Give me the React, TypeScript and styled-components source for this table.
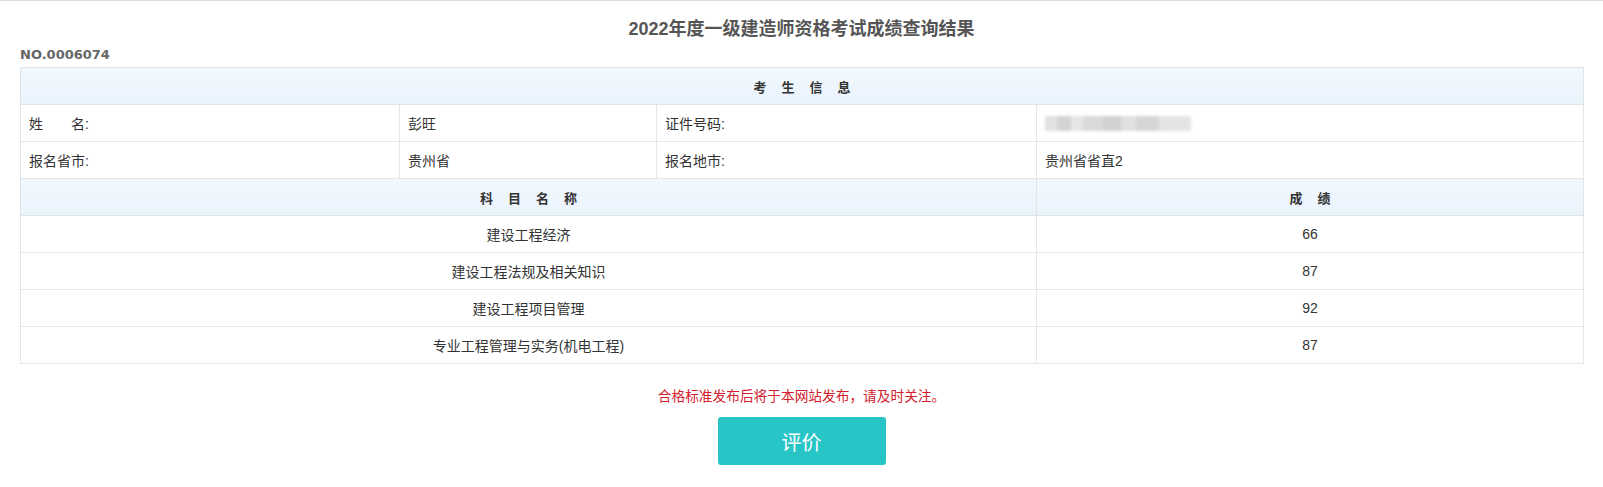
import React from "react";
import styled, { createGlobalStyle } from "styled-components";

const subjects = [
  { name: "建设工程经济", score: 66 },
  { name: "建设工程法规及相关知识", score: 87 },
  { name: "建设工程项目管理", score: 92 },
  { name: "专业工程管理与实务(机电工程)", score: 87 },
];

const GlobalStyle = createGlobalStyle`
  html, body { margin: 0; padding: 0; background: #fff; }
  body {
    font-family: "Liberation Sans", "Noto Sans CJK SC", sans-serif;
    color: #333;
  }
`;

export default function App() {
  return (
    <>
      <GlobalStyle />
      <Page>
        <Title>2022年度一级建造师资格考试成绩查询结果</Title>
        <SerialNo>NO.0006074</SerialNo>
        <ScoreTable>
          <colgroup>
            <col style={{ width: 379 }} />
            <col style={{ width: 257 }} />
            <col style={{ width: 380 }} />
            <col style={{ width: 547 }} />
          </colgroup>
          <tbody>
            <tr>
              <HeadCell colSpan={4}>考生信息</HeadCell>
            </tr>
            <tr>
              <Cell>姓　　名:</Cell>
              <Cell>彭旺</Cell>
              <Cell>证件号码:</Cell>
              <Cell>
                <Blurred />
              </Cell>
            </tr>
            <tr>
              <Cell>报名省市:</Cell>
              <Cell>贵州省</Cell>
              <Cell>报名地市:</Cell>
              <Cell>贵州省省直2</Cell>
            </tr>
            <tr>
              <HeadCell colSpan={3}>科目名称</HeadCell>
              <HeadCell>成绩</HeadCell>
            </tr>
            {subjects.map((s) => (
              <tr key={s.name}>
                <Cell colSpan={3} $center>
                  {s.name}
                </Cell>
                <Cell $center>{s.score}</Cell>
              </tr>
            ))}
          </tbody>
        </ScoreTable>
        <Notice>合格标准发布后将于本网站发布，请及时关注。</Notice>
        <ButtonRow>
          <RateButton>评价</RateButton>
        </ButtonRow>
      </Page>
    </>
  );
}

const Page = styled.div`
  border-top: 1px solid #dcdcdc;
  padding: 0 20px;
`;
const Title = styled.h1`
  margin: 0;
  padding-top: 16px;
  font-size: 18px;
  line-height: 24px;
  font-weight: 700;
  color: #555;
  text-align: center;
`;
const SerialNo = styled.div`
  margin-top: 6px;
  font-family: "DejaVu Sans", sans-serif;
  font-size: 13px;
  line-height: 16px;
  font-weight: 700;
  color: #666;
`;
const ScoreTable = styled.table`
  margin-top: 4px;
  width: 100%;
  table-layout: fixed;
  border-collapse: collapse;
  border: 1px solid #dfe4e8;
  font-size: 14px;
`;
const HeadCell = styled.td`
  height: 36px;
  padding: 0 0 0 15px;
  border: 1px solid #dfe4e8;
  background: linear-gradient(#f1f8fe, #eaf4fc);
  text-align: center;
  font-size: 13px;
  font-weight: 700;
  letter-spacing: 15px;
  color: #333;
`;
const Cell = styled.td<{ $center?: boolean }>`
  height: 36px;
  padding: 0 8px;
  border: 1px solid #e4e7ea;
  text-align: ${({ $center }) => ($center ? "center" : "left")};
  color: #333;
  white-space: nowrap;
`;
const Blurred = styled.span`
  display: inline-block;
  vertical-align: middle;
  width: 146px;
  height: 15px;
  background: linear-gradient(
    90deg,
    #e2e2e2 0 8%,
    #d4d4d4 8% 18%,
    #e6e6e6 18% 26%,
    #dadada 26% 40%,
    #d2d2d2 40% 52%,
    #e0e0e0 52% 62%,
    #d6d6d6 62% 78%,
    #e4e4e4 78% 100%
  );
  filter: blur(1.5px);
`;
const Notice = styled.div`
  margin-top: 23px;
  font-size: 13.7px;
  line-height: 20px;
  color: #d3202e;
  text-align: center;
`;
const ButtonRow = styled.div`
  display: flex;
  justify-content: center;
  margin-top: 10px;
`;
const RateButton = styled.button`
  width: 168px;
  height: 48px;
  border: none;
  border-radius: 3px;
  background: #27c5c6;
  color: #fff;
  font-family: "Noto Sans CJK SC", sans-serif;
  font-size: 20px;
  cursor: pointer;
`;
